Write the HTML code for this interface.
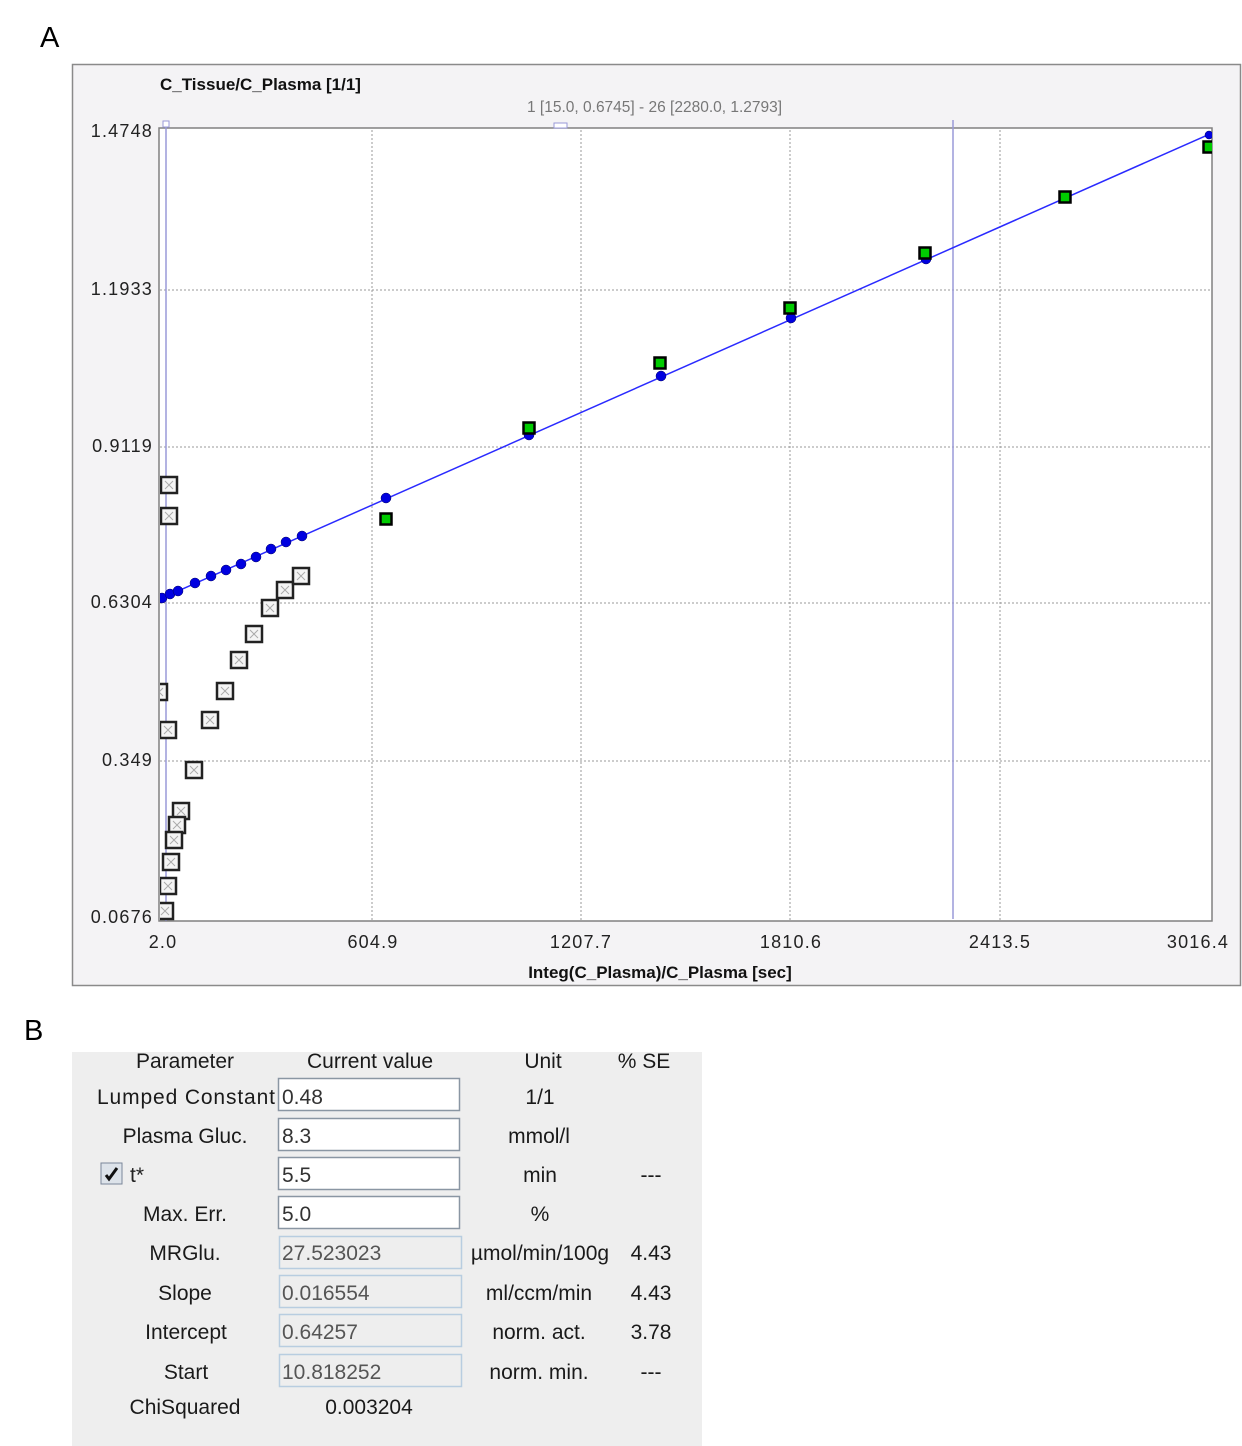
<!DOCTYPE html>
<html><head><meta charset="utf-8"><style>
html,body{margin:0;padding:0;background:#fff;}
body{width:1242px;height:1446px;position:relative;overflow:hidden;font-family:"Liberation Sans",sans-serif;}
</style></head><body>
<svg width="1242" height="1446" viewBox="0 0 1242 1446" xmlns="http://www.w3.org/2000/svg" style="position:absolute;left:0;top:0">
<defs>
<g id="os"><rect x="-8" y="-8" width="16" height="16" fill="#f4f4f4" stroke="#222" stroke-width="2.5"/><path d="M-4 -4L4 4M4 -4L-4 4" stroke="#aaa" stroke-width="1"/></g>
<g id="gs"><rect x="-5.5" y="-5.5" width="11" height="11" fill="#0c0" stroke="#000" stroke-width="2.5"/></g>
<clipPath id="pc"><rect x="160" y="129" width="1052" height="792"/></clipPath>
</defs>
<text x="40" y="47" font-family="Liberation Sans" font-size="29" fill="#000">A</text>
<text x="24" y="1040" font-family="Liberation Sans" font-size="29" fill="#000">B</text>
<rect x="72.5" y="64.5" width="1168" height="921" fill="#f4f3f5" stroke="#8a8a8a" stroke-width="1.5"/>
<text x="160" y="90" font-size="17" font-weight="bold" fill="#111">C_Tissue/C_Plasma [1/1]</text>
<text x="527" y="112" font-size="15.5" fill="#777">1 [15.0, 0.6745] - 26 [2280.0, 1.2793]</text>
<rect x="159" y="128" width="1053" height="793" fill="#fff" stroke="#808080" stroke-width="1.5"/>
<g stroke="#999" stroke-width="1" stroke-dasharray="2,2">
<line x1="372" y1="130" x2="372" y2="920"/><line x1="581" y1="130" x2="581" y2="920"/>
<line x1="790" y1="130" x2="790" y2="920"/><line x1="1000" y1="130" x2="1000" y2="920"/>
<line x1="160" y1="290" x2="1210" y2="290"/><line x1="160" y1="447" x2="1210" y2="447"/>
<line x1="160" y1="603" x2="1210" y2="603"/><line x1="160" y1="761" x2="1210" y2="761"/>
</g>
<g font-size="18" fill="#222" text-anchor="end" letter-spacing="1.2">
<text x="153" y="137">1.4748</text><text x="153" y="295">1.1933</text><text x="153" y="452">0.9119</text>
<text x="153" y="608">0.6304</text><text x="153" y="766">0.349</text><text x="153" y="923">0.0676</text>
</g>
<g font-size="18" fill="#222" text-anchor="middle" letter-spacing="1.2">
<text x="163" y="948">2.0</text><text x="373" y="948">604.9</text><text x="581" y="948">1207.7</text>
<text x="791" y="948">1810.6</text><text x="1000" y="948">2413.5</text><text x="1198" y="948">3016.4</text>
</g>
<text x="660" y="978" font-size="17" font-weight="bold" fill="#111" text-anchor="middle">Integ(C_Plasma)/C_Plasma [sec]</text>
<line x1="166" y1="126" x2="166" y2="921" stroke="#9a9ad8" stroke-width="1.5"/>
<line x1="953" y1="120" x2="953" y2="919" stroke="#9a9ad8" stroke-width="1.5"/>
<rect x="163" y="121" width="6" height="6" fill="#fff" stroke="#9a9ad8"/>
<rect x="554" y="123" width="13" height="5" fill="#fff" stroke="#9a9ad8"/>
<g clip-path="url(#pc)">
<use href="#os" x="169" y="485"/><use href="#os" x="169" y="516"/><use href="#os" x="159" y="692"/>
<use href="#os" x="168" y="730"/><use href="#os" x="181" y="811"/><use href="#os" x="177" y="825"/>
<use href="#os" x="174" y="840"/><use href="#os" x="171" y="862"/><use href="#os" x="168" y="886"/>
<use href="#os" x="165" y="911"/><use href="#os" x="194" y="770"/><use href="#os" x="210" y="720"/>
<use href="#os" x="225" y="691"/><use href="#os" x="239" y="660"/><use href="#os" x="254" y="634"/>
<use href="#os" x="270" y="608"/><use href="#os" x="285" y="590"/><use href="#os" x="301" y="576"/>
<line x1="160" y1="599" x2="1212" y2="133" stroke="#2a2aff" stroke-width="1.5"/>
<g fill="#0000e0" stroke="#000060" stroke-width="0.5">
<circle cx="162" cy="598" r="5"/><circle cx="170" cy="594" r="5"/><circle cx="178" cy="591" r="5"/>
<circle cx="195" cy="583" r="5"/><circle cx="211" cy="576" r="5"/><circle cx="226" cy="570" r="5"/>
<circle cx="241" cy="564" r="5"/><circle cx="256" cy="557" r="5"/><circle cx="271" cy="549" r="5"/>
<circle cx="286" cy="542" r="5"/><circle cx="302" cy="536" r="5"/><circle cx="386" cy="498" r="5"/>
<circle cx="529" cy="435" r="5"/><circle cx="661" cy="376" r="5"/><circle cx="791" cy="318" r="5"/>
<circle cx="926" cy="259" r="5"/><circle cx="1209" cy="135" r="4"/>
</g>
<use href="#gs" x="386" y="519"/><use href="#gs" x="529" y="428"/><use href="#gs" x="660" y="363"/>
<use href="#gs" x="790" y="308"/><use href="#gs" x="925" y="253"/><use href="#gs" x="1065" y="197"/>
<use href="#gs" x="1209" y="147"/>
</g>
<rect x="72" y="1052" width="630" height="394" fill="#eeeeee"/>
<g font-size="21" fill="#1a1a1a" text-anchor="middle">
<text x="185" y="1068">Parameter</text><text x="370" y="1068">Current value</text>
<text x="543" y="1068">Unit</text><text x="644" y="1068">% SE</text>
<text x="186" y="1104" textLength="178">Lumped Constant</text><text x="185" y="1143">Plasma Gluc.</text>
<text x="185" y="1221">Max. Err.</text><text x="185" y="1260">MRGlu.</text>
<text x="185" y="1300">Slope</text><text x="186" y="1339">Intercept</text>
<text x="186" y="1379">Start</text><text x="185" y="1414">ChiSquared</text>
<text x="369" y="1414">0.003204</text>
<text x="540" y="1104">1/1</text><text x="539" y="1143">mmol/l</text><text x="540" y="1182">min</text>
<text x="540" y="1221">%</text><text x="540" y="1260">µmol/min/100g</text><text x="539" y="1300">ml/ccm/min</text>
<text x="539" y="1339">norm. act.</text><text x="539" y="1379">norm. min.</text>
<text x="651" y="1182">---</text><text x="651" y="1260">4.43</text><text x="651" y="1300">4.43</text>
<text x="651" y="1339">3.78</text><text x="651" y="1379">---</text>
</g>
<rect x="101" y="1163" width="21" height="21" fill="#dde3ea" stroke="#7a8799"/>
<path d="M106 1175 L109 1179 L117 1168" stroke="#111" stroke-width="3" fill="none"/>
<text x="130" y="1182" font-size="21" fill="#222">t*</text>
<g fill="#fff" stroke="#8a96a3" stroke-width="1.5">
<rect x="278.5" y="1078.5" width="181" height="32"/><rect x="278.5" y="1118.5" width="181" height="32"/>
<rect x="278.5" y="1157.5" width="181" height="32"/><rect x="278.5" y="1196.5" width="181" height="32"/>
</g>
<g fill="#eeeeee" stroke="#b8cde0" stroke-width="1.5">
<rect x="279.5" y="1236.5" width="182" height="32"/><rect x="279.5" y="1275.5" width="182" height="32"/>
<rect x="279.5" y="1314.5" width="182" height="32"/><rect x="279.5" y="1354.5" width="182" height="32"/>
</g>
<g font-size="21" fill="#333">
<text x="282" y="1104">0.48</text><text x="282" y="1143">8.3</text><text x="282" y="1182">5.5</text>
<text x="282" y="1221">5.0</text>
<text x="282" y="1260" fill="#555">27.523023</text><text x="282" y="1300" fill="#555">0.016554</text>
<text x="282" y="1339" fill="#555">0.64257</text><text x="282" y="1379" fill="#555">10.818252</text>
</g>
</svg>
</body></html>
